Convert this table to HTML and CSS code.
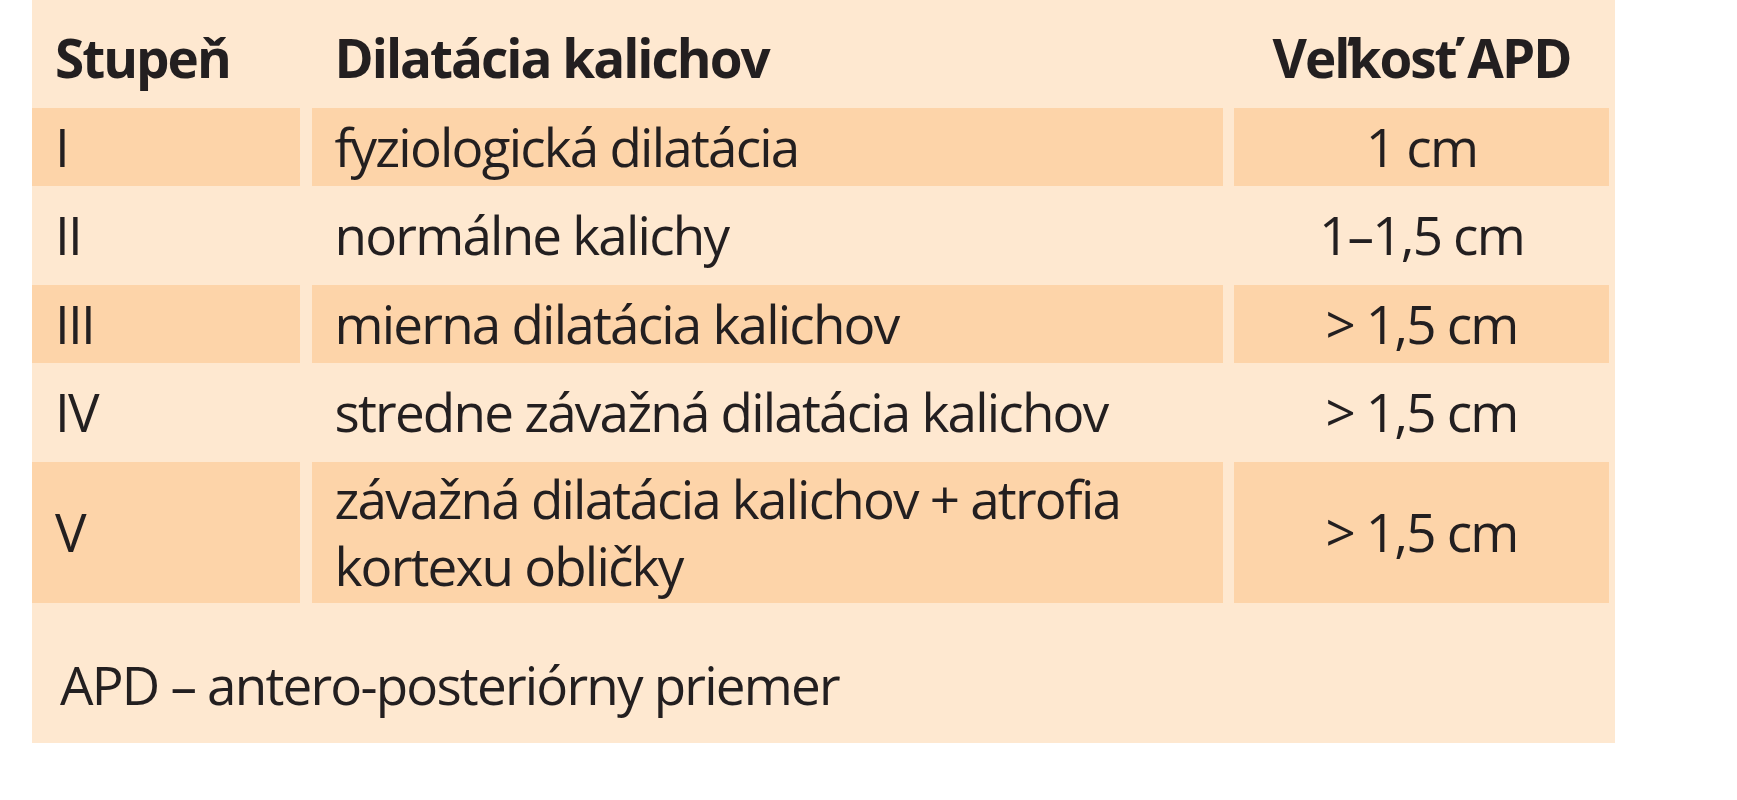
FILE: index.html
```html
<!DOCTYPE html>
<html lang="sk">
<head>
<meta charset="utf-8">
<title>Stupne dilatácie</title>
<link rel="stylesheet" href="styles.css">
</head>
<body>
<div class="panel">
  <div class="grid">
    <div class="cell head">Stupeň</div>
    <div class="cell head">Dilatácia kalichov</div>
    <div class="cell head center">Veľkosť APD</div>

    <div class="cell band">I</div>
    <div class="cell band">fyziologická dilatácia</div>
    <div class="cell band center">1 cm</div>

    <div class="cell">II</div>
    <div class="cell">normálne kalichy</div>
    <div class="cell center">1–1,5 cm</div>

    <div class="cell band">III</div>
    <div class="cell band">mierna dilatácia kalichov</div>
    <div class="cell band center">&gt; 1,5 cm</div>

    <div class="cell">IV</div>
    <div class="cell">stredne závažná dilatácia kalichov</div>
    <div class="cell center">&gt; 1,5 cm</div>

    <div class="cell band">V</div>
    <div class="cell band">závažná dilatácia kalichov + atrofia<br>kortexu obličky</div>
    <div class="cell band center">&gt; 1,5 cm</div>
  </div>
  <div class="note">APD – antero-posteriórny priemer</div>
</div>
</body>
</html>
```

FILE: styles.css
```css
html, body {
  margin: 0;
  padding: 0;
  background: #ffffff;
}

body {
  font-family: "Open Sans", "Noto Sans", sans-serif;
  color: #231f20;
}

.panel {
  margin-left: 32px;
  width: 1583px;
  background: #fee8d0;
  font-size: 53px;
  line-height: 66.7px;
  letter-spacing: -1.8px;
}

.grid {
  display: grid;
  grid-template-columns: 268px 911px 375px;
  grid-auto-rows: minmax(78px, auto);
  column-gap: 11.5px;
  row-gap: 10.5px;
  padding-top: 19.5px;
}

.cell {
  display: flex;
  align-items: center;
  padding: 4px 23px;
  white-space: nowrap;
}

.cell.center {
  justify-content: center;
  text-align: center;
}

.cell.head {
  font-weight: 700;
  letter-spacing: -2px;
}

.cell.band {
  background: #fdd4a9;
}

.note {
  padding: 49px 0 24px 28px;
}
```
